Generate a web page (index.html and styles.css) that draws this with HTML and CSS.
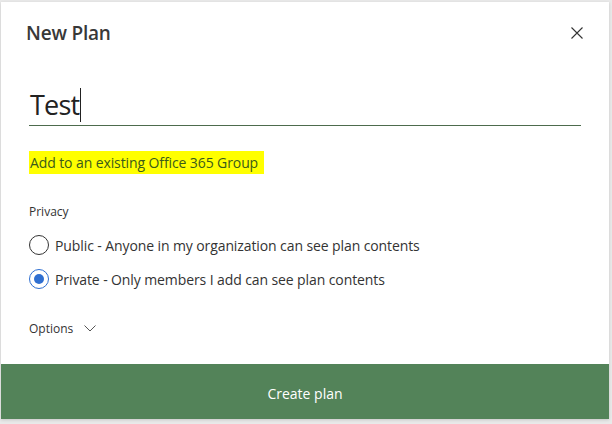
FILE: index.html
```html
<!DOCTYPE html>
<html>
<head>
<meta charset="utf-8">
<link rel="stylesheet" href="styles.css">
</head>
<body>
<div class="dialog">
  <div class="header">
    <h1 class="title">New Plan</h1>
    <button class="close" aria-label="Close">
      <svg width="12" height="12" viewBox="0 0 12 12"><path d="M0.5 0.5 L11.5 11.5 M11.5 0.5 L0.5 11.5" stroke="#333" stroke-width="1.1" fill="none"/></svg>
    </button>
  </div>
  <div class="content">
    <div class="name-field">
      <span class="name-text">Test</span><span class="caret"></span>
    </div>
    <div class="link-row"><span class="link">Add to an existing Office 365 Group</span></div>
    <div class="privacy-label">Privacy</div>
    <div class="radio-row">
      <span class="radio"></span>
      <span class="radio-text">Public - Anyone in my organization can see plan contents</span>
    </div>
    <div class="radio-row">
      <span class="radio checked"><span class="dot"></span></span>
      <span class="radio-text">Private - Only members I add can see plan contents</span>
    </div>
    <div class="options">
      <span>Options</span>
      <svg class="chev" width="12" height="7" viewBox="0 0 12 7"><path d="M0.5 0.5 L6 6 L11.5 0.5" stroke="#555" stroke-width="1" fill="none"/></svg>
    </div>
  </div>
  <button class="create">Create plan</button>
</div>
</body>
</html>
```
FILE: styles.css
```css
html, body {
  margin: 0;
  padding: 0;
}
body {
  background: #e9e9e9;
  width: 612px;
  height: 424px;
  overflow: hidden;
  font-family: "Open Sans", "Noto Sans", sans-serif;
  color: #333;
}
.dialog {
  margin: 2px 0 0 1px;
  width: 608px;
  height: 417px;
  background: #fff;
  display: flex;
  flex-direction: column;
  box-shadow: 0 1px 3px rgba(0,0,0,0.15);
}
.header {
  display: flex;
  align-items: center;
  justify-content: space-between;
  height: 62px;
  padding: 0 26px 0 25px;
}
.title {
  margin: 0;
  font-size: 19px;
  font-weight: 600;
  color: #383838;
  letter-spacing: -0.2px;
}
.close {
  border: 0;
  background: none;
  padding: 0;
  width: 12px;
  height: 12px;
  display: flex;
}
.content {
  flex: 1;
  padding: 0 28px 0 28px;
  display: flex;
  flex-direction: column;
}
.name-field {
  margin-top: 21px;
  height: 40px;
  border-bottom: 1px solid #4d6b4d;
  display: flex;
  align-items: center;
  padding-left: 1px;
}
.name-text {
  font-size: 27px;
  color: #222;
  letter-spacing: -0.8px;
  line-height: 40px;
}
.caret {
  width: 1px;
  height: 34px;
  background: #222;
  margin-left: 1px;
}
.link-row {
  margin-top: 25px;
  display: flex;
}
.link {
  background: #ffff00;
  color: #3b5b1b;
  font-size: 14px;
  line-height: 23px;
  padding: 0 6px 0 1px;
  letter-spacing: -0.1px;
}
.privacy-label {
  margin-top: 30px;
  font-size: 12px;
  color: #333;
  line-height: 16px;
}
.radio-row {
  display: flex;
  align-items: center;
  height: 34px;
  margin-top: 0;
}
.privacy-label + .radio-row {
  margin-top: 8px;
}
.radio {
  width: 18px;
  height: 18px;
  border: 1px solid #333;
  border-radius: 50%;
  margin-right: 6px;
  display: flex;
  align-items: center;
  justify-content: center;
  flex: none;
}
.radio.checked {
  border-color: #2f6fd1;
}
.dot {
  width: 10px;
  height: 10px;
  border-radius: 50%;
  background: #2f6fd1;
}
.radio-text {
  font-size: 14px;
  color: #333;
  letter-spacing: -0.1px;
}
.options {
  margin-top: 24px;
  display: flex;
  align-items: center;
  gap: 11px;
  font-size: 12px;
  color: #333;
}
.create {
  height: 55px;
  border: 0;
  background: #538359;
  color: #fff;
  font-family: "Open Sans", "Noto Sans", sans-serif;
  font-size: 14px;
  margin-bottom: 0;
  padding: 3px 0 0 0;
}
```
